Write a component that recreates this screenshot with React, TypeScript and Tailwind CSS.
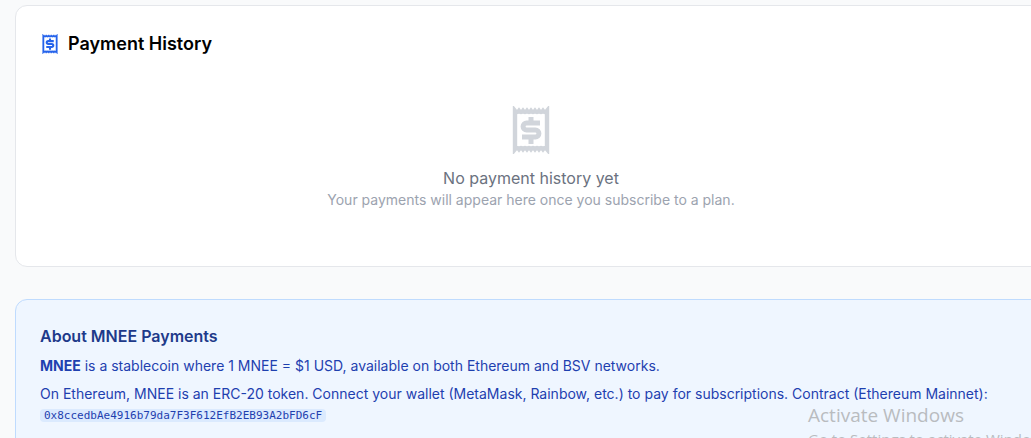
const ReceiptDollarIcon = ({ className }: { className?: string }) => (
  <svg viewBox="0 0 24 24" fill="none" stroke="currentColor" strokeWidth="2.2" className={className}>
    <path d="M4 2.4q1 1.2 2 0q1 1.2 2 0q1 1.2 2 0q1 1.2 2 0q1 1.2 2 0q1 1.2 2 0q1 1.2 2 0q1 1.2 2 0V21.6q-1-1.2-2 0q-1-1.2-2 0q-1-1.2-2 0q-1-1.2-2 0q-1-1.2-2 0q-1-1.2-2 0q-1-1.2-2 0q-1-1.2-2 0z" />
    <path strokeWidth="2.5" d="M16.5 8.5H9.8a1.75 1.75 0 0 0 0 3.5h4.4a1.75 1.75 0 0 1 0 3.5H7.5M12 5.5v3M12 15.5v3.5" />
  </svg>
);

const App = () => {
  return (
    <div className="relative h-[438px] w-[1031px] overflow-hidden bg-[#f9fafb] font-['Inter',sans-serif]">
      <div className="ml-[15px] flex w-[1032px] flex-col gap-8 pt-[5px]">
        <div className="h-[262px] rounded-xl border border-[#e5e7eb] bg-white px-6 pt-6">
          <div className="flex items-center gap-2">
            <ReceiptDollarIcon className="h-5 w-5 text-[#2563eb]" />
            <h2 className="text-lg font-semibold leading-7 text-black">Payment History</h2>
          </div>
          <div className="mt-12 flex flex-col items-center">
            <ReceiptDollarIcon className="h-12 w-12 text-[#d1d5db]" />
            <p className="mt-3 text-base leading-6 text-[#6b7280]">No payment history yet</p>
            <p className="text-sm leading-5 text-[#9ca3af]">Your payments will appear here once you subscribe to a plan.</p>
          </div>
        </div>

        <div className="h-[200px] rounded-xl border border-[#bfdbfe] bg-[#eff6ff] px-6 pt-6">
          <h3 className="text-base font-semibold leading-6 text-[#1e3a8a]">About MNEE Payments</h3>
          <p className="mt-2 text-sm leading-5 text-[#1e40af]">
            <strong className="font-bold">MNEE</strong> is a stablecoin where 1 MNEE = $1 USD, available on both Ethereum and BSV networks.
          </p>
          <p className="mt-2 text-sm leading-5 text-[#1e40af]">
            On Ethereum, MNEE is an ERC-20 token. Connect your wallet (MetaMask, Rainbow, etc.) to pay for subscriptions. Contract (Ethereum Mainnet):{' '}
            <code className="rounded bg-[#dbeafe] px-1 font-['DejaVu_Sans_Mono',monospace] text-[11px]">0x8ccedbAe4916b79da7F3F612EfB2EB93A2bFD6cF</code>
          </p>
        </div>
      </div>

      <div className="absolute left-[808px] top-[403px] whitespace-nowrap font-['Open_Sans',sans-serif] text-[#b9bcbf]">
        <div className="text-[19px] leading-6">Activate Windows</div>
        <div className="mt-[2px] text-[15px] leading-5">Go to Settings to activate Windows.</div>
      </div>
    </div>
  );
};

export default App;
